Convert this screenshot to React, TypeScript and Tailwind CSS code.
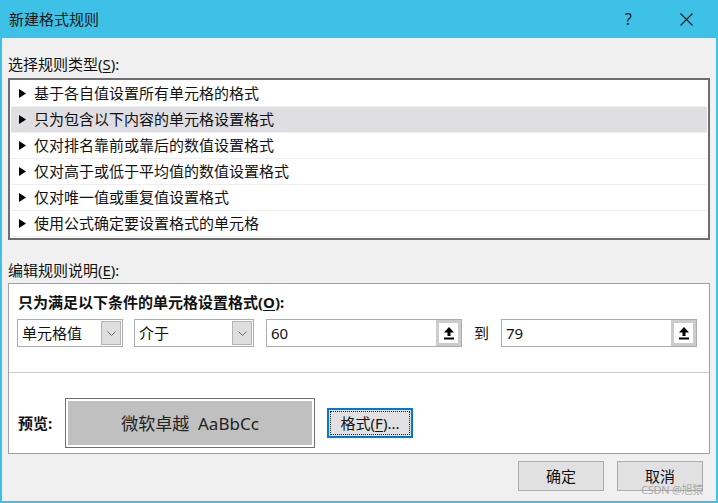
import React from "react";

const rules = [
  "基于各自值设置所有单元格的格式",
  "只为包含以下内容的单元格设置格式",
  "仅对排名靠前或靠后的数值设置格式",
  "仅对高于或低于平均值的数值设置格式",
  "仅对唯一值或重复值设置格式",
  "使用公式确定要设置格式的单元格",
];

function Chevron() {
  return (
    <svg width="9" height="5" viewBox="0 0 9 5" fill="none">
      <path d="M0.5 0.5 L4.5 4.5 L8.5 0.5" stroke="#6b6b6b" strokeWidth="1" />
    </svg>
  );
}

function ComboBox({ value, width }: { value: string; width: string }) {
  return (
    <div className={`flex h-[28px] ${width} items-stretch border border-[#acacac] bg-white p-px`}>
      <span className="flex flex-1 items-center pl-[3px] text-[15px] leading-none">{value}</span>
      <span className="flex w-[20px] items-center justify-center border border-[#b4b4b4] bg-[#dedede]">
        <Chevron />
      </span>
    </div>
  );
}

function SpinInput({ value }: { value: string }) {
  return (
    <div className="flex h-[28px] w-[196px] items-stretch border border-[#acacac] bg-white">
      <span className="flex flex-1 items-center pl-[4px] text-[15px] leading-none">{value}</span>
      <span className="flex w-[25px] items-center justify-center border-[3px] border-[#cccccc] bg-white">
        <svg width="12" height="14" viewBox="0 0 12 14">
          <path d="M6 1 L11 6.5 L7.5 6.5 L7.5 10 L4.5 10 L4.5 6.5 L1 6.5 Z" fill="#000" />
          <rect x="1" y="11.5" width="10" height="2" fill="#000" />
        </svg>
      </span>
    </div>
  );
}

export default function App() {
  return (
    <div className="flex h-[503px] w-[718px] flex-col bg-[#3dc1e6] px-[2px] pb-[2px] font-['Noto_Sans','Noto_Sans_CJK_SC',sans-serif] text-[#111]">
      {/* Title bar */}
      <div className="flex h-[38px] shrink-0 items-center">
        <span className="ml-[7px] text-[15px] leading-none text-[#1a1a1a]">新建格式规则</span>
        <span className="ml-auto mr-[48px] text-[16px] leading-none text-[#1a1a1a]">?</span>
        <svg width="13" height="13" viewBox="0 0 13 13" className="mr-[23px]">
          <path d="M0.5 0.5 L12.5 12.5 M12.5 0.5 L0.5 12.5" stroke="#1a1a1a" strokeWidth="1.1" />
        </svg>
      </div>

      {/* Body */}
      <div className="flex flex-1 flex-col bg-[#f0f0f0] px-[6px]">
        <div className="mt-[16px] h-[20px] text-[15px] leading-[20px]">
          选择规则类型(<span className="underline underline-offset-2">S</span>):
        </div>

        {/* Rule type list */}
        <div className="mt-[4px] border-2 border-[#6d6d6d] bg-white p-px">
          {rules.map((rule, i) => (
            <div
              key={rule}
              className={`flex h-[26px] items-center border-b border-[#efefef] pl-[8px] ${
                i === 1 ? "bg-[#dfdee3]" : ""
              }`}
            >
              <svg width="7" height="9" viewBox="0 0 7 9" className="shrink-0">
                <path d="M0 0 L7 4.5 L0 9 Z" fill="#000" />
              </svg>
              <span className="ml-[8px] text-[15px] leading-none">{rule}</span>
            </div>
          ))}
        </div>

        <div className="mt-[20px] h-[20px] text-[15px] leading-[20px]">
          编辑规则说明(<span className="underline underline-offset-2">E</span>):
        </div>

        {/* Rule description panel */}
        <div className="mt-[3px] flex h-[171px] flex-col border border-[#a0a0a0] bg-white">
          <div className="mt-[8px] h-[20px] pl-[9px] text-[15px] font-bold leading-[20px]">
            只为满足以下条件的单元格设置格式(<span className="underline underline-offset-2">O</span>):
          </div>
          <div className="mt-[7px] flex items-center pl-[8px]">
            <ComboBox value="单元格值" width="w-[106px]" />
            <div className="ml-[11px]">
              <ComboBox value="介于" width="w-[120px]" />
            </div>
            <div className="ml-[12px]">
              <SpinInput value="60" />
            </div>
            <span className="w-[39px] text-center text-[15px] leading-none">到</span>
            <SpinInput value="79" />
          </div>

          <div className="mt-[25px] h-px bg-[#cacaca]" />

          <div className="mt-[25px] flex items-center pl-[9px]">
            <span className="w-[47px] text-[15px] font-bold leading-none">预览:</span>
            <div className="h-[50px] w-[250px] border border-[#6e6e6e] bg-white p-[2px]">
              <div className="flex h-full items-center justify-center bg-[#c0c0c0] text-[17px] leading-none text-[#222]">
                微软卓越&nbsp;&nbsp;AaBbCc
              </div>
            </div>
            <button className="ml-[12px] h-[30px] w-[86px] border-2 border-[#0078d7] bg-[#e1e1e1] p-px">
              <span className="flex h-full items-center justify-center border border-dotted border-[#222] text-[15px] leading-none">
                格式(<span className="underline underline-offset-2">F</span>)...
              </span>
            </button>
          </div>
        </div>

        {/* Footer buttons */}
        <div className="relative mt-[7px] flex justify-end gap-[13px] pr-[7px]">
          <button className="h-[30px] w-[86px] border border-[#adadad] bg-[#e1e1e1] text-[15px] leading-none">
            确定
          </button>
          <button className="h-[30px] w-[86px] border border-[#adadad] bg-[#e1e1e1] text-[15px] leading-none">
            取消
          </button>
          <span className="absolute right-[7px] top-[23px] text-[11px] leading-none tracking-tight text-[#9a9a9a]/80">
            CSDN @旭猿
          </span>
        </div>
      </div>
    </div>
  );
}
